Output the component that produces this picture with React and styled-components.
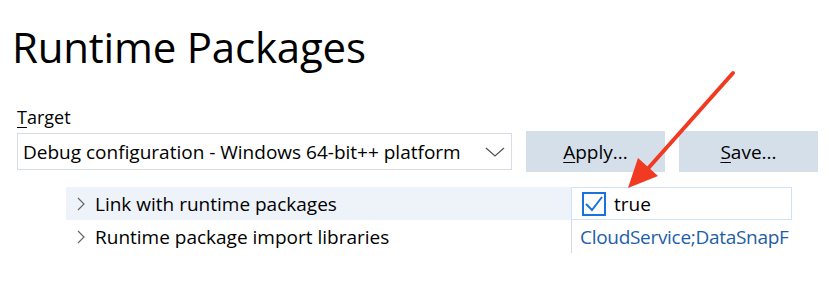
import React from 'react'
import styled, { createGlobalStyle } from 'styled-components'

const Global = createGlobalStyle`
  html, body {
    margin: 0;
    padding: 0;
    background: #ffffff;
  }
  body {
    font-family: "Open Sans", "Noto Sans", sans-serif;
    color: #000000;
  }
`

function App() {
  return (
    <>
      <Global />
      <Page>
        <Title>Runtime Packages</Title>
        <Label><u>T</u>arget</Label>
        <Toolbar>
          <Select>
            <span>Debug configuration - Windows 64-bit++ platform</span>
            <svg width="20" height="10" viewBox="0 0 20 10">
              <path d="M1 1 L10 9 L19 1" fill="none" stroke="#555" strokeWidth="1.3" />
            </svg>
          </Select>
          <Button><u>A</u>pply...</Button>
          <Button><u>S</u>ave...</Button>
        </Toolbar>
        <Grid>
          <NameCell selected>
            <Chevron />
            Link with runtime packages
          </NameCell>
          <ValueCell selected>
            <Check>
              <svg width="20" height="18" viewBox="0 0 20 18">
                <path d="M2 9 L8 15 L18 2" fill="none" stroke="#1a73d9" strokeWidth="2" />
              </svg>
            </Check>
            true
          </ValueCell>
          <NameCell>
            <Chevron />
            Runtime package import libraries
          </NameCell>
          <ValueCell link>CloudService;DataSnapF</ValueCell>
        </Grid>
        <Arrow width="120" height="130" viewBox="0 0 120 130">
          <line x1="113" y1="3" x2="24" y2="103" stroke="#f03a22" strokeWidth="4" strokeLinecap="round" />
          <polygon points="8,118 18,88 38,106" fill="#f03a22" />
        </Arrow>
      </Page>
    </>
  )
}

export default App

function Chevron() {
  return (
    <ChevronIcon width="10" height="16" viewBox="0 0 10 16">
      <path d="M2 2 L8 8 L2 14" fill="none" stroke="#666" strokeWidth="1.2" />
    </ChevronIcon>
  )
}

const Page = styled.div`
  position: relative;
  width: 830px;
  height: 287px;
  overflow: hidden;
  padding: 0 0 0 17px;
  box-sizing: border-box;
`

const Title = styled.h1`
  margin: 19px 0 0 -5px;
  font-weight: 400;
  font-size: 42px;
  line-height: 56px;
  letter-spacing: -0.2px;
`

const Label = styled.div`
  margin-top: 30px;
  font-size: 18px;
  line-height: 24px;
  u {
    text-decoration-thickness: 1px;
    text-underline-offset: 3px;
  }
`

const Toolbar = styled.div`
  display: flex;
  align-items: center;
  gap: 14px;
  margin-top: 2px;
`

const Select = styled.div`
  width: 495px;
  height: 37px;
  box-sizing: border-box;
  border: 1px solid #d8dde3;
  display: flex;
  align-items: center;
  justify-content: space-between;
  padding: 0 6px 0 5px;
  font-size: 19px;
  white-space: nowrap;
`

const Button = styled.div`
  width: 139px;
  height: 41px;
  background: #d4dfea;
  display: flex;
  align-items: center;
  justify-content: center;
  font-size: 19px;
  u {
    text-decoration-thickness: 1px;
    text-underline-offset: 3px;
  }
`

const Grid = styled.div`
  display: grid;
  grid-template-columns: 505px 221px;
  grid-auto-rows: 33px;
  margin: 15px 0 0 49px;
`

const NameCell = styled.div`
  display: flex;
  align-items: center;
  padding-left: 10px;
  font-size: 19px;
  white-space: nowrap;
  background: ${p => (p.selected ? '#eef3f9' : 'transparent')};
`

const ChevronIcon = styled.svg`
  margin-right: 9px;
`

const ValueCell = styled.div`
  display: flex;
  align-items: center;
  box-sizing: border-box;
  font-size: 19px;
  white-space: nowrap;
  overflow: hidden;
  padding-left: ${p => (p.selected ? '10px' : '8px')};
  color: ${p => (p.link ? '#1d5ea8' : '#000')};
  letter-spacing: ${p => (p.link ? '-0.3px' : '0')};
  border: ${p => (p.selected ? '1px solid #cfe3f6' : 'none')};
  border-left: 1px solid ${p => (p.selected ? '#cfe3f6' : '#d6d9dd')};
`

const Check = styled.span`
  width: 24px;
  height: 24px;
  box-sizing: border-box;
  border: 2px solid #1a73d9;
  display: inline-flex;
  align-items: center;
  justify-content: center;
  margin-right: 8px;
`

const Arrow = styled.svg`
  position: absolute;
  left: 620px;
  top: 70px;
`
